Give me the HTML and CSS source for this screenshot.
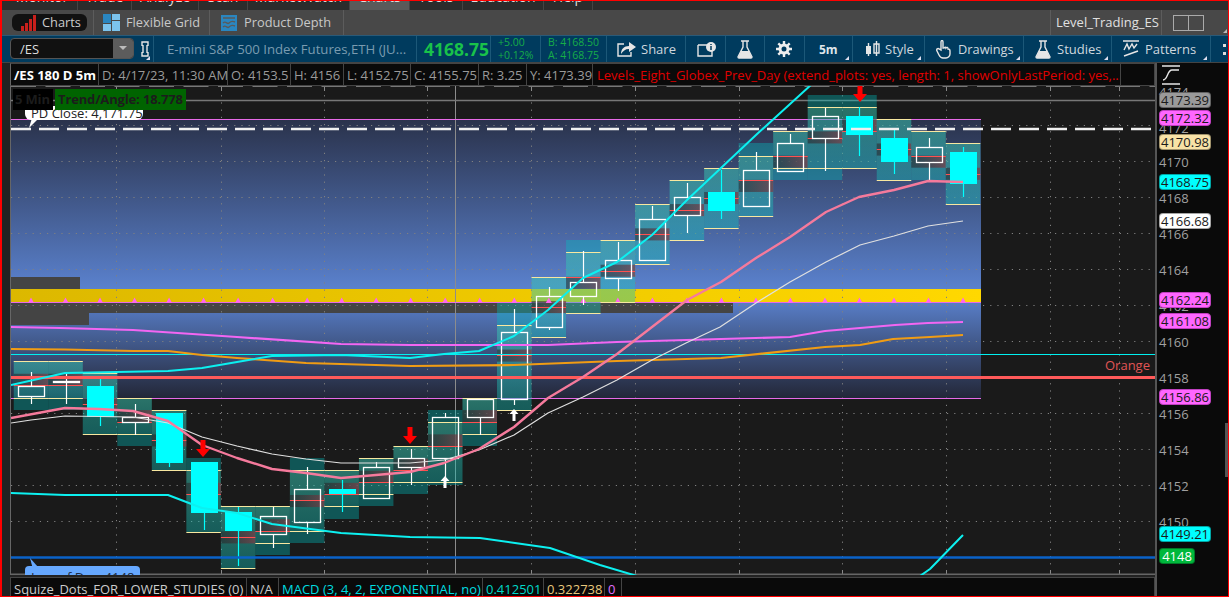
FILE: index.html
```html
<!DOCTYPE html>
<html lang="en">
<head>
<meta charset="utf-8">
<title>Charts</title>
<link rel="stylesheet" href="styles.css">
</head>
<body>
<div class="window">
  <nav class="tabs">
    <div class="tab t1"><span>Monitor</span></div>
    <div class="tab t2"><span>Trade</span></div>
    <div class="tab t3"><span>Analyze</span></div>
    <div class="tab t4"><span>Scan</span></div>
    <div class="tab t5"><span>MarketWatch</span></div>
    <div class="tab t6 active"><span>Charts</span></div>
    <div class="tab t7"><span>Tools</span></div>
    <div class="tab t8"><span>Education</span></div>
    <div class="tab t9"><span>Help</span></div>
  </nav>

  <div class="subbar">
    <div class="sub-cell s1">
      <div class="pill">
        <svg class="ico" width="16" height="16" viewBox="0 0 16 16"><path class="i-red" d="M1 11h3v5H1zM5 8h3v8H5zM9 4h3v12H9zM13 0h3v16h-3z"/></svg>
        <span>Charts</span>
      </div>
    </div>
    <div class="sub-cell s2">
      <svg class="ico" width="17" height="17" viewBox="0 0 17 17"><path class="i-blue1" d="M0 0h8v9H0z"/><path class="i-blue2" d="M9 0h8v6H9zM9 7h8v10H9zM0 10h8v7H0z"/></svg>
      <span>Flexible Grid</span>
    </div>
    <div class="sub-cell s3">
      <svg class="ico" width="16" height="16" viewBox="0 0 16 16"><path class="i-blue1" d="M0 0h16v16H0z"/><path class="i-depth" d="M2 3h12M2 8c3-3 4 2 6 0s4-2 6-1M2 12c3-3 4 2 6 0s4-2 6-1"/></svg>
      <span>Product Depth</span>
    </div>
    <div class="sub-spacer"></div>
    <div class="sub-cell s4"><span>Level_Trading_ES</span></div>
    <div class="sub-cell s5"><div class="split"><i></i><i></i></div></div>
  </div>

  <div class="symbar">
    <div class="sym-input"><span>/ES</span><b class="drop"></b></div>
    <div class="sb w-link menu">
      <svg class="ico" width="10" height="18" viewBox="0 0 10 18"><path class="i-line" d="M2 6V2h6v4M2 12v4h6v-4M3 5v8M7 5v8"/></svg>
    </div>
    <div class="sb w-title"><span class="title">E-mini S&amp;P 500 Index Futures,ETH (JU...</span></div>
    <div class="sb w-price"><span class="last">4168.75</span></div>
    <div class="sb w-chg"><div class="two"><span>+5.00</span><span>+0.12%</span></div></div>
    <div class="sb w-ba"><div class="two"><span>B: 4168.50</span><span>A: 4168.75</span></div></div>
    <div class="sb w-share">
      <svg class="ico" width="19" height="15" viewBox="0 0 19 15"><path class="i-line" d="M7 2H1v12h13v-4"/><path class="i-fill" d="M12 0l7 5-7 5V7C8 7 6 9 4 12c0-5 3-8 8-8z"/></svg>
      <span>Share</span>
    </div>
    <div class="sb w-info">
      <svg class="ico" width="19" height="15" viewBox="0 0 19 15"><path class="i-line" d="M1 3h10M1 3v11h14V9"/><circle class="i-fill" cx="14" cy="5" r="5"/><path class="i-cut" d="M14 4v4M14 2v1"/></svg>
    </div>
    <div class="sb w-flask">
      <svg class="ico" width="16" height="19" viewBox="0 0 16 19"><path class="i-line" d="M4 1h8M6 1v6L1 17c0 1 0 1 1 1h12c1 0 1 0 1-1L10 7V1"/><path class="i-fill" d="M4 11h8l3 7H1z"/></svg>
    </div>
    <div class="sb w-gear">
      <svg class="ico" width="16" height="16" viewBox="0 0 16 16"><circle class="i-gear" cx="8" cy="8" r="4"/><path class="i-gearteeth" d="M8 0v3M8 13v3M0 8h3M13 8h3M2.3 2.3l2.2 2.2M11.5 11.5l2.2 2.2M2.3 13.7l2.2-2.2M11.5 4.5l2.2-2.2"/></svg>
    </div>
    <div class="sb w-tf menu"><b>5m</b></div>
    <div class="sb w-style menu">
      <svg class="ico" width="15" height="17" viewBox="0 0 15 17"><path class="i-fill" d="M1 5h5v8H1z"/><path class="i-line" d="M3.500 2v13M9 3h5v9H9zM11.500 0v15"/></svg>
      <span>Style</span>
    </div>
    <div class="sb w-draw menu">
      <svg class="ico" width="15" height="19" viewBox="0 0 15 19"><path class="i-line" d="M5 10V2c0-2 2-2 2 0v6h1c1-1 2-1 2 0 1-1 2-1 2 1 1 0 2 0 2 2v3c0 2-2 4-4 4H7c-2 0-3-1-4-3L1 11c-1-2 1-3 2-2z"/></svg>
      <span>Drawings</span>
    </div>
    <div class="sb w-study menu">
      <svg class="ico" width="16" height="19" viewBox="0 0 16 19"><path class="i-line" d="M4 1h8M6 1v6L1 17c0 1 0 1 1 1h12c1 0 1 0 1-1L10 7V1"/><path class="i-fill" d="M4 11h8l3 7H1z"/></svg>
      <span>Studies</span>
    </div>
    <div class="sb w-pattern menu">
      <svg class="ico" width="16" height="18" viewBox="0 0 16 18"><path class="i-line" d="M0 1h16M1 10l3-6 2 5 3-5 2 4 3-4M1 16l14-5"/></svg>
      <span>Patterns</span>
    </div>
    <div class="sb w-more"><div class="dots"><i></i><i></i></div></div>
  </div>

  <div class="main">
    <div class="chart-col">
      <div class="inforow">
        <div class="ic sym">/ES 180 D 5m</div>
        <div class="ic i-d">D: 4/17/23, 11:30 AM</div>
        <div class="ic i-o">O: 4153.5</div>
        <div class="ic i-h">H: 4156</div>
        <div class="ic i-l">L: 4152.75</div>
        <div class="ic i-c">C: 4155.75</div>
        <div class="ic i-r">R: 3.25</div>
        <div class="ic i-y">Y: 4173.39</div>
        <div class="ic study">Levels_Eight_Globex_Prev_Day (extend_plots: yes, length: 1, showOnlyLastPeriod: yes,...</div>
      </div>
      <div class="plot">
        <svg id="chart" class="chart" width="1144" height="489" viewBox="11 86 1144 489">
          <defs>
            <linearGradient id="panel" x1="0" y1="0" x2="0" y2="1">
              <stop offset="0" stop-color="#2a324b"/>
              <stop offset="0.63" stop-color="#5c84d2"/>
              <stop offset="1" stop-color="#232738"/>
            </linearGradient>
            <linearGradient id="band" x1="0" y1="0" x2="1" y2="0">
              <stop offset="0" stop-color="#dcb800"/>
              <stop offset="1" stop-color="#ffd800"/>
            </linearGradient>
            <linearGradient id="sheen" x1="0" y1="0" x2="0" y2="1">
              <stop offset="0" stop-color="#78c8a0" stop-opacity="0.26"/>
              <stop offset="1" stop-color="#78c8a0" stop-opacity="0.06"/>
            </linearGradient>
            <linearGradient id="maroon" x1="0" y1="0" x2="1" y2="0">
              <stop offset="0" stop-color="#241a1e" stop-opacity="0.5"/>
              <stop offset="1" stop-color="#803a44" stop-opacity="0.7"/>
            </linearGradient>
          </defs>
        </svg>
        <div class="ov-head"><span class="ov-min">5 Min</span><span class="ov-trend">Trend/Angle: 18.778</span></div>
        <div class="ov-pd"><span>PD Close: 4,171.75</span></div>
        <div class="ov-low"><span>Low of Day: 4148</span></div>
      </div>
      <div class="studies">
        <div class="st st-a">Squize_Dots_FOR_LOWER_STUDIES (0)</div>
        <div class="st st-b">N/A</div>
        <div class="st st-c">MACD (3, 4, 2, EXPONENTIAL, no)</div>
        <div class="st st-d">0.412501</div>
        <div class="st st-e">0.322738</div>
        <div class="st st-f">0</div>
      </div>
    </div>
    <div class="axis">
      <svg class="axis-ico" width="18" height="20" viewBox="0 0 18 20"><path class="i-line" d="M0 1h18M0 19h18M1 15c5 0 4-10 9-10h7"/></svg>
      <span class="tick p74">4174</span>
      <span class="tick p72">4172</span>
      <span class="tick p70">4170</span>
      <span class="tick p68">4168</span>
      <span class="tick p66">4166</span>
      <span class="tick p64">4164</span>
      <span class="tick p62">4162</span>
      <span class="tick p60">4160</span>
      <span class="tick p58">4158</span>
      <span class="tick p56">4156</span>
      <span class="tick p54">4154</span>
      <span class="tick p52">4152</span>
      <span class="tick p50">4150</span>
      <span class="tag gray t7339">4173.39</span>
      <span class="tag pink t7232">4172.32</span>
      <span class="tag sand t7098">4170.98</span>
      <span class="tag cyan t6875">4168.75</span>
      <span class="tag white t6668">4166.68</span>
      <span class="tag pink t6224">4162.24</span>
      <span class="tag pink t6108">4161.08</span>
      <span class="tag pink t5686">4156.86</span>
      <span class="tag cyan t4921">4149.21</span>
      <span class="tag green t48">4148</span>
      <div class="thumb"></div>
    </div>
  </div>
</div>
<script src="chart.js"></script>
</body>
</html>
```
FILE: styles.css
```css
* { box-sizing: border-box; }
html, body { margin: 0; padding: 0; height: 100%; background: #111; overflow: hidden; }
body { font-family: "Open Sans", "Liberation Sans", sans-serif; font-size: 13px; color: #ccc; }
.window { width: 1229px; height: 597px; border: solid #f00; border-width: 1px 1px 1px 2px; display: flex; flex-direction: column; background: #222; overflow: hidden; position: relative; }
.ico { flex: none; display: block; }

/* tabs */
.tabs { display: flex; height: 9px; background: #2c2c2c; padding-left: 5px; overflow: hidden; flex: none; }
.tab { border-right: 1px solid #444; text-align: center; height: 9px; overflow: hidden; }
.tab span { display: block; margin-top: -13px; line-height: 18px; font-size: 14px; color: #ddd; }
.tab.active { background: #5a5a5a; }
.t1 { width: 71px; } .t2 { width: 54px; } .t3 { width: 67px; } .t4 { width: 49px; } .t5 { width: 102px; }
.t6 { width: 60px; } .t7 { width: 53px; } .t8 { width: 81px; } .t9 { width: 49px; }

/* sub toolbar */
.subbar { display: flex; align-items: stretch; height: 25px; background: #484848; flex: none; }
.sub-cell { display: flex; align-items: center; border-right: 1px solid #5c5c5c; color: #c8c8c8; font-size: 12.8px; }
.sub-cell span { margin-top: -2px; }
.s1 { width: 92px; padding-left: 10px; }
.s2 { width: 116px; padding-left: 9px; gap: 6px; }
.s3 { width: 134px; padding-left: 11px; gap: 7px; }
.sub-spacer { flex: 1; border-right: 1px solid #5c5c5c; }
.s4 { width: 111px; padding-left: 5px; color: #e0e0e0; font-size: 13px; }
.s5 { width: 66px; padding-left: 11px; border-right: 0; position: relative; }
.s5::after { content: ""; position: absolute; right: 1px; bottom: 2px; border: 2px solid transparent; border-right-color: #bbb; border-bottom-color: #bbb; }
.pill { display: flex; align-items: center; gap: 6px; width: 75px; height: 17px; padding-left: 8px; background: #111; border-radius: 6px; color: #ccc; }
.split { display: flex; width: 31px; height: 16px; border: 1px solid #aaa; }
.split i { flex: 1; }
.split i + i { border-left: 1px solid #aaa; }
.i-red { fill: #c8201c; }
.i-blue1 { fill: #2a86c0; }
.i-blue2 { fill: #7cc4ee; }
.i-depth { fill: none; stroke: #5a5a5a; stroke-width: 1.4; }

/* symbol bar */
.symbar { display: flex; align-items: stretch; height: 28px; background: #003b5e; border-top: 1px solid #2a5a78; border-bottom: 1px solid #444; padding-left: 8px; flex: none; }
.sym-input { width: 124px; height: 21px; margin-top: 2px; display: flex; align-items: center; justify-content: space-between; padding-left: 9px; background: #111; border: 1px solid #555; border-radius: 4px; color: #ddd; font-size: 13px; }
.drop { width: 20px; height: 19px; background: #5c5c5c; position: relative; border-radius: 0 3px 3px 0; }
.drop::after { content: ""; position: absolute; left: 6px; top: 7px; border: 4px solid transparent; border-top: 4px solid #bbb; }
.sb { display: flex; align-items: center; gap: 5px; border-right: 1px solid #1c5878; color: #cfd8de; font-size: 13px; position: relative; flex: none; }
.menu::after { content: ""; position: absolute; right: 3px; bottom: 2px; border: 2px solid transparent; border-right-color: #dde; border-bottom-color: #dde; }
.w-link { width: 20px; padding-left: 6px; }
.w-title { width: 263px; padding-left: 13px; }
.title { color: #7a9bb0; font-size: 13.2px; white-space: nowrap; }
.w-price { width: 74px; padding-left: 7px; }
.last { font-size: 17.5px; font-weight: 700; color: #19c24a; }
.w-chg { width: 50px; padding-left: 7px; }
.w-ba { width: 66px; padding-left: 7px; }
.two { display: flex; flex-direction: column; font-size: 10.5px; line-height: 13px; color: #17ad48; white-space: nowrap; }
.w-share { width: 79px; padding-left: 10px; }
.w-info { width: 40px; padding-left: 11px; }
.w-flask { width: 39px; padding-left: 11px; }
.w-gear { width: 40px; padding-left: 11px; }
.w-tf { width: 48px; padding-left: 14px; font-size: 12px; }
.w-tf b { color: #dfe6ea; }
.w-style { width: 72px; padding-left: 12px; }
.w-draw { width: 99px; padding-left: 11px; gap: 7px; font-size: 12.8px; }
.w-study { width: 88px; padding-left: 11px; gap: 6px; }
.w-pattern { width: 99px; padding-left: 11px; gap: 6px; }
.w-more { width: 17px; padding-left: 12px; border-right: 0; }
.dots { display: flex; flex-direction: column; gap: 5px; }
.dots i { width: 3px; height: 3px; background: #ddd; }
.i-line { fill: none; stroke: #e6e6e6; stroke-width: 1.4; }
.i-fill { fill: #e6e6e6; }
.i-cut { fill: none; stroke: #003b5e; stroke-width: 1.5; }
.i-gear { fill: none; stroke: #eee; stroke-width: 3; }
.i-gearteeth { fill: none; stroke: #eee; stroke-width: 2.4; }

/* main chart area */
.main { flex: 1; display: flex; min-height: 0; background: #0a0a0a; }
.chart-col { width: 1153px; padding-left: 8px; display: flex; flex-direction: column; background: #222; flex: none; }
.inforow { display: flex; height: 23px; background: #0a0a0a; border: 1px solid #444; border-left-color: #666; flex: none; }
.ic { display: flex; align-items: center; padding-left: 3px; border-right: 1px solid #444; color: #9a9a9a; white-space: nowrap; overflow: hidden; flex: none; }
.sym { width: 88px; padding-left: 3px; color: #fff; font-weight: 700; }
.i-d { width: 129px; } .i-o { width: 63px; } .i-h { width: 53px; } .i-l { width: 67px; }
.i-c { width: 68px; } .i-r { width: 48px; } .i-y { width: 66px; }
.study { width: 528px; padding-left: 4px; color: #e00000; }
.plot { position: relative; height: 489px; width: 1145px; overflow: hidden; background: #1a1a1a; flex: none; border-left: 1px solid #666; }
.chart { display: block; }
.ov-head { position: absolute; left: 2px; top: 3px; display: flex; gap: 2px; font-weight: 700; color: #1c1c1c; line-height: 21px; z-index: 2; letter-spacing: -.15px; }
.ov-min { width: 40px; height: 21px; padding-left: 2px; background: #000; overflow: hidden; white-space: nowrap; }
.ov-trend { width: 131px; height: 21px; padding-left: 3px; background: #006400; white-space: nowrap; }
.ov-pd { position: absolute; left: 14px; top: 20px; width: 118px; height: 14px; background: #fff; border-radius: 0 0 6px 6px; color: #222; padding-left: 6px; line-height: 14px; z-index: 1; white-space: nowrap; }
.ov-pd span { display: block; margin-top: 0; }
.ov-pd::after { content: ""; position: absolute; left: 4px; top: 14px; width: 8px; height: 8px; background: #fff; clip-path: polygon(30% 0, 100% 0, 0 100%); }
.ov-low { position: absolute; left: 14px; top: 480px; width: 115px; height: 20px; background: #66a8ff; border-radius: 4px; color: #1a2a44; padding-left: 6px; line-height: 18px; padding-top: 2px; white-space: nowrap; }
.ov-low::before { content: ""; position: absolute; left: 5px; top: -8px; width: 8px; height: 9px; background: #66a8ff; clip-path: polygon(0 0, 100% 100%, 30% 100%); }

/* studies */
.studies { flex: 1; display: flex; margin-top: 2px; background: #0a0a0a; border: 1px solid #444; border-bottom: 0; min-height: 0; overflow: hidden; }
.st { display: flex; align-items: flex-start; padding: 2px 0 0 3px; border-right: 1px solid #444; white-space: nowrap; line-height: 18px; flex: none; }
.st-a { width: 236px; color: #ccc; }
.st-b { width: 32px; color: #ccc; }
.st-c { width: 204px; color: #00dde0; }
.st-d { width: 61px; color: #00d8c8; }
.st-e { width: 61px; color: #e8c87c; }
.st-f { width: 17px; color: #e070ff; }

/* axis */
.axis { position: relative; flex: 1; background: #0a0a0a; border-left: 2px solid #555; overflow: hidden; }
.axis-ico { position: absolute; left: 5px; top: 2px; }
.tick { position: absolute; left: 2px; font-size: 13px; line-height: 16px; color: #a0a0a0; }
.p74 { top: 21px; } .p72 { top: 57px; } .p70 { top: 91px; } .p68 { top: 127px; } .p66 { top: 163px; } .p64 { top: 199px; }
.p62 { top: 235px; } .p60 { top: 271px; } .p58 { top: 307px; } .p56 { top: 343px; } .p54 { top: 379px; } .p52 { top: 415px; } .p50 { top: 451px; }
.tag { position: absolute; left: 2px; width: 52px; height: 16px; line-height: 14px; font-size: 13px; text-align: center; color: #1a1a1a; border: 1px solid rgba(0,0,0,.35); border-radius: 4px; }
.gray { background: #9a9a9a; } .pink { background: #ff66ff; border-color: #c040c0; } .sand { background: #f8e2a6; } .cyan { background: #0ff; } .white { background: #fff; }
.green { background: #00b83c; color: #fff; width: 36px; }
.t7339 { top: 29px; } .t7232 { top: 47px; } .t7098 { top: 71px; } .t6875 { top: 111px; } .t6668 { top: 150px; }
.t6224 { top: 229px; } .t6108 { top: 250px; } .t5686 { top: 326px; } .t4921 { top: 463px; } .t48 { top: 485px; }
.thumb { position: absolute; right: 0; top: 360px; width: 3px; height: 54px; background: #555; }

/* svg chart parts */
.panel { fill: url(#panel); }
.band { fill: url(#band); }
.darkbar { fill: #444; }
.tri { fill: #ff66ee; }
.grid { stroke: #808080; stroke-width: 1; stroke-dasharray: 1.200 6; fill: none; }
.tickmark { stroke: #8a8a8a; stroke-width: 1; }
.hair { stroke: #8c8c8c; stroke-width: 1; }
.guide { stroke: #777; stroke-width: 1.300; }
.topdash { stroke: #777; stroke-width: 2; stroke-dasharray: 25 9.500; }
.wdash { stroke: #f0f0f0; stroke-width: 2.400; stroke-dasharray: 20 8; }
.mline { stroke: #e66ae6; stroke-width: 1.100; }
.cline { stroke: #00f0f0; stroke-width: 1; }
.sline { stroke: #ff5a5a; stroke-width: 3; }
.bline { stroke: #0a62c8; stroke-width: 2.500; }
.baseline { stroke: #666; stroke-width: 2; }
.teal { fill: rgba(0,195,195,.36); }
.sheen { fill: url(#sheen); }
.maroon { fill: url(#maroon); }
.yel { stroke: #f8e8a0; stroke-width: 1.200; }
.redl { stroke: #ff5050; stroke-width: 1.200; }
.hollow { fill: none; stroke: #fff; stroke-width: 1.300; }
.solid { fill: #0ff; }
.wick-h { stroke: #fff; stroke-width: 1.200; }
.wick-c { stroke: #0ff; stroke-width: 1.200; }
.ma { fill: none; stroke-linejoin: round; }
.ma-pink { stroke: #f57a9c; stroke-width: 2.400; }
.ma-white { stroke: #e0e0e0; stroke-width: 1.200; }
.ma-cyan { stroke: #0cf0f0; stroke-width: 2; }
.ma-mag { stroke: #f266f2; stroke-width: 2.200; }
.ma-org { stroke: #f09c14; stroke-width: 2.200; }
.arr-r { fill: #f00; }
.arr-w { fill: #fff; }
.lbl { fill: #e05555; font-size: 13px; }
```
FILE: chart.js
```js
(function () {
  var NS = 'http://www.w3.org/2000/svg';
  var svg = document.getElementById('chart');

  function el(name, cls, attrs) {
    var n = document.createElementNS(NS, name);
    n.setAttribute('class', cls);
    for (var k in attrs) n.setAttribute(k, attrs[k]);
    svg.appendChild(n);
    return n;
  }
  function rect(cls, x, y, w, h) { return el('rect', cls, { x: x, y: y, width: w, height: h }); }
  function line(cls, x1, y1, x2, y2) { return el('line', cls, { x1: x1, y1: y1, x2: x2, y2: y2 }); }
  function poly(cls, pts) { return el('polyline', 'ma ' + cls, { points: pts.join(' ') }); }

  var L = 11, R = 1155, B = 575;
  var barX = function (i) { return 31 + i * 34.52; };

  // background panel and value zones
  rect('panel', L, 119, 970, 279);
  rect('darkbar', L, 277, 69, 12);
  rect('band', L, 289, 970, 13);
  rect('darkbar', L, 303, 722, 10);
  rect('darkbar', L, 313, 78, 12);

  // grid
  var gx = [116, 221, 324, 427, 531, 635, 739, 842, 946, 1050, 1119];
  gx.forEach(function (x) {
    line('grid', x + .5, 88, x + .5, B);
    line('tickmark', x + .5, 87, x + .5, 91);
    line('tickmark', x + .5, 570, x + .5, B);
  });
  for (var p = 0; p <= 12; p++) line('grid', L, 125.5 + p * 36, R, 125.5 + p * 36);
  line('hair', 455.5, 86, 455.5, B);
  line('topdash', L, 86, R, 86);
  line('guide', L, 100.5, R, 100.5);
  line('mline', L, 119.5, 981, 119.5);
  line('mline', L, 302.5, 981, 302.5);
  line('mline', L, 398.5, 981, 398.5);

  // bars: tealTop, tealBot, yellow1, yellow2, kind, bodyTop, bodyBot, wickTop, wickBot, red
  var bars = [
    [361,410,361,398,'h',386,396,372,404,385],
    [361,410,361,398,'h',381,382,374,404,385],
    [373,434,373,434,'c',386,417,379,426,404],
    [398,446,398,434,'h',417,422,404,435,422],
    [410,470,410,470,'c',413,463,413,467,440],
    [458,532,470,532,'c',462,513,462,530,494],
    [506,568,506,568,'c',512,531,507,566,537],
    [506,555,506,543,'h',516,534,507,548,531],
    [458,543,470,531,'h',489,522,467,534,500],
    [470,519,470,506,'c',489,494,480,512,494],
    [458,506,458,494,'h',467,498,462,498,482],
    [446,494,446,482,'h',458,467,449,485,470],
    [410,485,422,482,'h',417,458,413,480,446],
    [398,446,398,434,'h',399,417,399,435,422],
    [303,410,325,410,'h',332,399,309,405,355],
    [277,337,277,337,'h',296,327,287,330,307],
    [240,313,252,313,'h',282,296,251,305,277],
    [240,302,240,302,'h',260,278,242,291,271],
    [204,264,204,264,'h',219,260,206,260,234],
    [180,240,180,240,'h',197,215,183,233,210],
    [168,228,168,228,'c',192,211,170,219,198],
    [143,216,156,216,'h',170,206,152,206,180],
    [131,180,131,168,'h',143,171,134,171,156],
    [95,180,107,168,'h',116,138,108,171,138],
    [95,168,107,168,'c',116,135,107,156,131],
    [119,180,119,180,'c',138,162,130,174,149],
    [131,180,131,null,'h',147,162,138,180,156],
    [143,204,143,204,'c',152,184,147,197,174]
  ];

  bars.forEach(function (b, i) {
    var x = barX(i), w = 34.5, l = x - w / 2;
    rect('teal', l, b[0], w, b[1] - b[0]);
    var y2 = b[3] === null ? b[1] : b[3];
    rect('sheen', l, b[2], w, y2 - b[2]);
    var top = 398 - Math.ceil((398 - b[9]) / 12.12) * 12.12;
    rect('maroon', l, top, w, 12.1);
  });

  for (var t = 0; t < 28; t++) {
    var tx = barX(t);
    el('polygon', 'tri', { points: (tx - 3) + ',303 ' + (tx + 3) + ',303 ' + tx + ',297.500' });
  }

  bars.forEach(function (b, i) {
    var x = barX(i), l = x - 17.25, r = x + 17.25;
    line('yel', l, b[2] + .5, r, b[2] + .5);
    if (b[3] !== null) line('yel', l, b[3] + .5, r, b[3] + .5);
    line('redl', l, b[9] + .5, r, b[9] + .5);
    var cx = Math.round(x) + .5;
    if (b[4] === 'h') {
      line('wick-h', cx, b[7], cx, b[5]);
      line('wick-h', cx, b[6], cx, b[8]);
      rect('hollow', cx - 13, b[5] + .5, 26, b[6] - b[5]);
    } else {
      line('wick-c', cx, b[7], cx, b[8]);
      rect('solid', cx - 13.5, b[5], 27, b[6] - b[5]);
    }
  });

  // level lines
  line('cline', L, 354.5, R, 354.5);
  line('sline', L, 377.5, R, 377.5);
  line('bline', L, 557.5, R, 557.5);
  line('wdash', L, 129, R, 129);
  line('baseline', L, 574.5, R, 574.5);

  var orange = el('text', 'lbl', { x: 1105, y: 370 });
  orange.textContent = 'Orange';

  // moving averages
  poly('ma-org', [11,349, 65,349.5, 133,351, 168,351, 202,355, 237,358, 306,363, 410,366, 514,365, 617,361, 721,358, 825,347, 860,345, 893,339, 930,337, 963,335]);
  poly('ma-mag', [11,327, 60,328, 133,330, 237,337, 341,344, 410,345, 548,345, 617,342, 721,339, 790,337, 825,331, 860,328, 895,325, 928,323, 963,322]);
  poly('ma-white', [11,423, 31,420, 65,416, 133,417, 168,423, 202,437, 237,446, 272,454, 306,459, 341,463, 376,463, 410,463, 444,460, 479,450, 514,435, 548,413, 583,397, 617,380, 652,360, 686,343, 720,327, 756,303, 790,282, 826,262, 860,245, 894,236, 928,226, 963,221]);
  poly('ma-pink', [11,418, 65,408, 99,409, 133,411, 168,421, 202,445, 237,458, 272,469, 306,473, 341,478, 376,475, 410,472, 444,463, 479,449, 514,427, 548,398, 583,377, 617,354, 652,327, 687,300, 721,282, 756,258, 790,237, 826,212, 859,197, 894,190, 928,181, 963,182]);
  poly('ma-cyan', [11,385, 65,373, 168,371, 202,368, 237,362, 272,356, 341,355, 410,358, 444,354, 479,351, 514,336, 548,310, 583,278, 617,262, 652,235, 687,200, 756,135, 812,84]);
  poly('ma-cyan', [11,493, 65,495, 168,495, 202,508, 237,513, 272,524, 341,533, 410,537, 480,538, 515,543, 550,548, 600,565, 637,576]);
  poly('ma-cyan', [920,576, 930,569, 963,535]);

  // signal arrows
  function down(x, y) {
    el('path', 'arr-r', { d: 'M' + (x - 2.5) + ' ' + y + 'h5v9h4.500l-7 8-7-8h4.500z' });
  }
  function up(x, y) {
    el('path', 'arr-w', { d: 'M' + (x - 1.5) + ' ' + (y + 12) + 'v-7h-3l4.500-5 4.500 5h-3v7z' });
  }
  down(203, 440); down(410, 427); down(860, 85);
  up(445, 476); up(514, 409);
})();
```
